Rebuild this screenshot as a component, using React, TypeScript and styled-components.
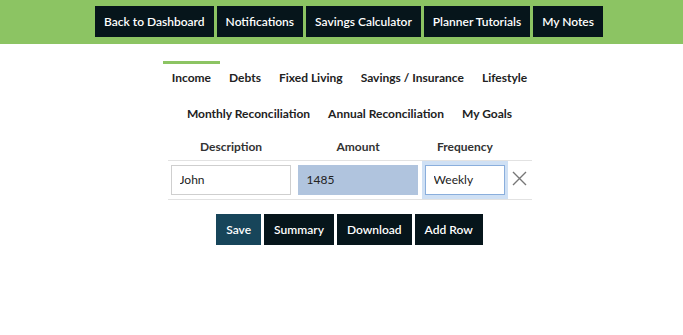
import React, { useState } from "react";
import styled, { createGlobalStyle } from "styled-components";

const GlobalStyle = createGlobalStyle`
  * { box-sizing: border-box; }
  body {
    margin: 0;
    background: #ffffff;
    font-family: Lato, "Open Sans", sans-serif;
    color: #222;
  }
`;

const TopBar = styled.header`
  background-color: #8cc463;
  height: 44px;
  display: flex;
  justify-content: center;
  align-items: flex-start;
  padding: 6px 0 0 15px;
  gap: 3px;
`;

const NavButton = styled.button`
  height: 31px;
  padding: 0 9px;
  border: none;
  background-color: #06151b;
  color: #fff;
  font-family: Lato, sans-serif;
  font-size: 12px;
  font-weight: 600;
  cursor: pointer;
`;

const Main = styled.main`
  display: flex;
  flex-direction: column;
  align-items: center;
  padding: 17px 0 0 16px;
`;

const TabRow = styled.div`
  display: flex;
  justify-content: center;
  height: 36px;
`;

const Tab = styled.div<{ $active?: boolean }>`
  padding: 0 9px 6px;
  display: flex;
  align-items: center;
  font-size: 12px;
  font-weight: 700;
  color: #222;
  cursor: pointer;
  border-top: 3px solid ${(p) => (p.$active ? "#8cc463" : "transparent")};
`;

const Table = styled.table`
  border-collapse: collapse;
  width: 364px;
`;

const Th = styled.th`
  font-size: 12px;
  font-weight: 700;
  color: #333;
  height: 27px;
  text-align: center;
  padding: 0;
`;

const Td = styled.td<{ $focus?: boolean }>`
  padding: 4px 3px;
  border-top: 1px solid #e2e2e2;
  border-bottom: 1px solid #e2e2e2;
  background: ${(p) => (p.$focus ? "#cfe0f4" : "transparent")};
`;

const Input = styled.input<{ $w: number; $fill?: boolean; $focus?: boolean }>`
  width: ${(p) => p.$w}px;
  height: 30px;
  padding: 0 8px;
  font-family: Lato, sans-serif;
  font-size: 12px;
  color: #222;
  background: ${(p) => (p.$fill ? "#b0c4de" : "#fff")};
  border: 1px solid ${(p) => (p.$fill ? "#b0c4de" : p.$focus ? "#8aaedc" : "#cfcfcf")};
  outline: none;
  display: block;
`;

const RemoveCell = styled.td`
  border-top: 1px solid #e2e2e2;
  border-bottom: 1px solid #e2e2e2;
  padding: 0 4px;
  text-align: center;
  vertical-align: middle;
`;

const Actions = styled.div`
  display: flex;
  gap: 3px;
  margin-top: 14px;
`;

const ActionButton = styled.button<{ $primary?: boolean }>`
  height: 31px;
  padding: 0 10px;
  border: none;
  background-color: ${(p) => (p.$primary ? "#17455a" : "#06151b")};
  color: #fff;
  font-family: Lato, sans-serif;
  font-size: 12px;
  font-weight: 600;
  cursor: pointer;
`;

const XIcon = () => (
  <svg width="15" height="15" viewBox="0 0 15 15" fill="none" stroke="#777" strokeWidth="1.4">
    <path d="M1 1 L14 14 M14 1 L1 14" />
  </svg>
);

export default function App() {
  const [active] = useState("Income");
  const nav = ["Back to Dashboard", "Notifications", "Savings Calculator", "Planner Tutorials", "My Notes"];
  const tabs1 = ["Income", "Debts", "Fixed Living", "Savings / Insurance", "Lifestyle"];
  const tabs2 = ["Monthly Reconciliation", "Annual Reconciliation", "My Goals"];

  return (
    <>
      <GlobalStyle />
      <TopBar>
        {nav.map((n) => (
          <NavButton key={n}>{n}</NavButton>
        ))}
      </TopBar>
      <Main>
        <TabRow>
          {tabs1.map((t) => (
            <Tab key={t} $active={t === active}>{t}</Tab>
          ))}
        </TabRow>
        <TabRow>
          {tabs2.map((t) => (
            <Tab key={t}>{t}</Tab>
          ))}
        </TabRow>
        <Table>
          <thead>
            <tr>
              <Th>Description</Th>
              <Th>Amount</Th>
              <Th>Frequency</Th>
              <Th />
            </tr>
          </thead>
          <tbody>
            <tr>
              <Td><Input $w={120} defaultValue="John" /></Td>
              <Td><Input $w={120} $fill defaultValue="1485" /></Td>
              <Td $focus><Input $w={80} $focus defaultValue="Weekly" /></Td>
              <RemoveCell><XIcon /></RemoveCell>
            </tr>
          </tbody>
        </Table>
        <Actions>
          <ActionButton $primary>Save</ActionButton>
          <ActionButton>Summary</ActionButton>
          <ActionButton>Download</ActionButton>
          <ActionButton>Add Row</ActionButton>
        </Actions>
      </Main>
    </>
  );
}
